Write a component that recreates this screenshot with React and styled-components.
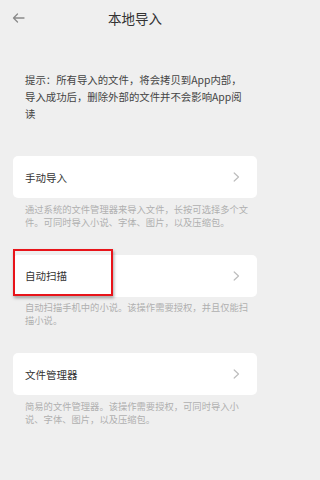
import React from 'react';
import styled, { createGlobalStyle } from 'styled-components';

const Global = createGlobalStyle`
	html, body {
		margin: 0;
		padding: 0;
		background: #efefef;
	}
	body {
		font-family: "Noto Sans CJK SC", "Noto Sans", sans-serif;
	}
`;

const Page = styled.div`
	width: 270px;
	min-height: 480px;
	background: #efefef;
	overflow: hidden;
`;

const Header = styled.header`
	display: grid;
	grid-template-columns: 36px 1fr 36px;
	align-items: center;
	height: 36px;
`;

const Back = styled.span`
	display: flex;
	justify-content: center;
	align-items: center;
	color: #8a8a8a;
`;

const Title = styled.h1`
	margin: 0;
	text-align: center;
	font-size: 13.5px;
	font-weight: 400;
	color: #333;
`;

const Tip = styled.p`
	margin: 34.5px 0 0;
	padding-left: 25px;
	font-size: 10.4px;
	line-height: 17px;
	color: #444;

	span {
		display: block;
		white-space: nowrap;
	}
`;

const List = styled.div`
	display: flex;
	flex-direction: column;
	gap: 26px;
	margin-top: 34.5px;
	padding: 0 13px;
`;

const Card = styled.div`
	position: relative;
	display: flex;
	justify-content: space-between;
	align-items: center;
	height: 42px;
	padding: 0 17px 0 12px;
	background: #fff;
	border-radius: 5px;
	font-size: 10.5px;
	color: #333;
`;

const Highlight = styled.div`
	position: absolute;
	top: -6px;
	left: 0;
	width: 100px;
	height: 47px;
	box-sizing: border-box;
	border: 2.5px solid #e8141a;
	box-shadow: 1px 2px 3px rgba(0, 0, 0, 0.35);
	pointer-events: none;
`;

const Desc = styled.p`
	margin: 4.5px 0 0;
	padding: 0 12px;
	font-size: 9.3px;
	line-height: 13px;
	color: #b0b0b0;

	span {
		display: block;
		white-space: nowrap;
	}
`;

const Chevron = () => (
	<svg width="7" height="10" viewBox="0 0 7 10" fill="none">
		<path d="M1.2 1 L5.5 5 L1.2 9" stroke="#bdbdbd" strokeWidth="1.2" strokeLinecap="round" strokeLinejoin="round" />
	</svg>
);

const ArrowLeft = () => (
	<svg width="13" height="10" viewBox="0 0 13 10" fill="none">
		<path d="M12 5 H1.5 M5.5 1 L1.5 5 L5.5 9" stroke="currentColor" strokeWidth="1.3" strokeLinecap="round" strokeLinejoin="round" />
	</svg>
);

const options = [
	{
		title: '手动导入',
		desc: ['通过系统的文件管理器来导入文件，长按可选择多个文', '件。可同时导入小说、字体、图片，以及压缩包。'],
	},
	{
		title: '自动扫描',
		desc: ['自动扫描手机中的小说。该操作需要授权，并且仅能扫', '描小说。'],
		marked: true,
	},
	{
		title: '文件管理器',
		desc: ['简易的文件管理器。该操作需要授权，可同时导入小', '说、字体、图片，以及压缩包。'],
	},
];

const App = () => (
	<Page>
		<Global />
		<Header>
			<Back><ArrowLeft /></Back>
			<Title>本地导入</Title>
			<span />
		</Header>

		<Tip>
			<span>提示：所有导入的文件，将会拷贝到App内部，</span>
			<span>导入成功后，删除外部的文件并不会影响App阅</span>
			<span>读</span>
		</Tip>

		<List>
			{options.map((o) => (
				<section key={o.title}>
					<Card>
						{o.title}
						<Chevron />
						{o.marked && <Highlight />}
					</Card>
					<Desc>
						{o.desc.map((line) => <span key={line}>{line}</span>)}
					</Desc>
				</section>
			))}
		</List>
	</Page>
);

export default App;
